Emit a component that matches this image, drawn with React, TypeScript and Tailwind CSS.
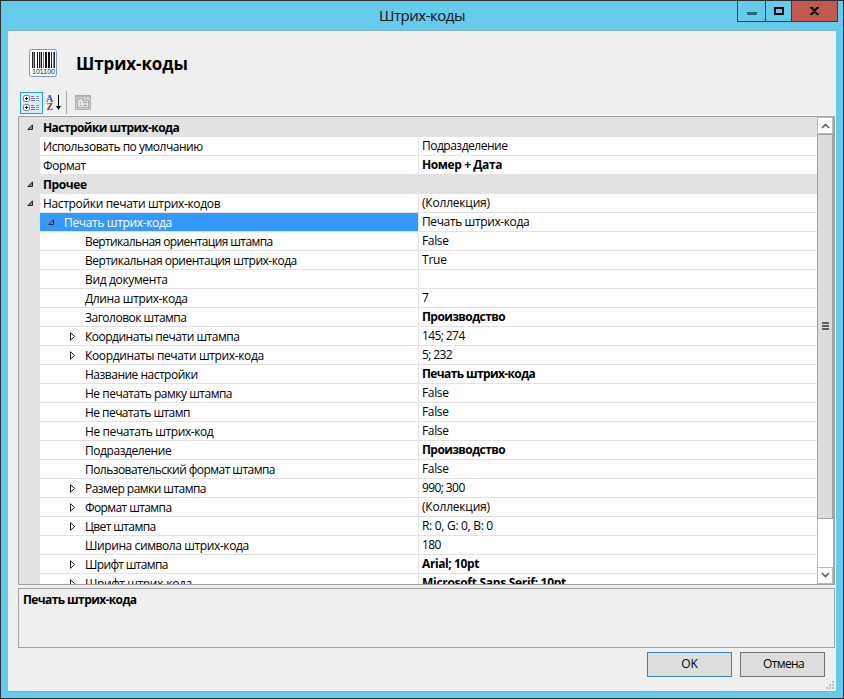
import React from "react";

type Row = {
  kind?: "category" | "selected";
  level: 0 | 1 | 2;
  label: string;
  track: string;
  value?: string;
  valueTrack?: string;
  bold?: boolean;
  arrow?: "open" | "closed";
};

const rows: Row[] = [
  { kind: "category", level: 0, label: "Настройки штрих-кода", track: "tracking-[-0.57px]", arrow: "open" },
  { level: 0, label: "Использовать по умолчанию", track: "tracking-[-0.48px]", value: "Подразделение", valueTrack: "tracking-[-0.5px]" },
  { level: 0, label: "Формат", track: "tracking-[-0.4px]", value: "Номер + Дата", valueTrack: "tracking-[-0.4px]", bold: true },
  { kind: "category", level: 0, label: "Прочее", track: "tracking-[-0.4px]", arrow: "open" },
  { level: 0, label: "Настройки печати штрих-кодов", track: "tracking-[-0.33px]", value: "(Коллекция)", valueTrack: "tracking-[-0.2px]", arrow: "open" },
  { kind: "selected", level: 1, label: "Печать штрих-кода", track: "tracking-[-0.35px]", value: "Печать штрих-кода", valueTrack: "tracking-[-0.38px]", arrow: "open" },
  { level: 2, label: "Вертикальная ориентация штампа", track: "tracking-[-0.6px]", value: "False", valueTrack: "tracking-[-0.35px]" },
  { level: 2, label: "Вертикальная ориентация штрих-кода", track: "tracking-[-0.48px]", value: "True", valueTrack: "tracking-[-0.2px]" },
  { level: 2, label: "Вид документа", track: "tracking-[-0.35px]", value: "" },
  { level: 2, label: "Длина штрих-кода", track: "tracking-[-0.37px]", value: "7" },
  { level: 2, label: "Заголовок штампа", track: "tracking-[-0.5px]", value: "Производство", valueTrack: "tracking-[-0.58px]", bold: true },
  { level: 2, label: "Координаты печати штампа", track: "tracking-[-0.5px]", value: "145; 274", valueTrack: "tracking-[-0.6px]", arrow: "closed" },
  { level: 2, label: "Координаты печати штрих-кода", track: "tracking-[-0.36px]", value: "5; 232", valueTrack: "tracking-[-0.6px]", arrow: "closed" },
  { level: 2, label: "Название настройки", track: "tracking-[-0.5px]", value: "Печать штрих-кода", valueTrack: "tracking-[-0.62px]", bold: true },
  { level: 2, label: "Не печатать рамку штампа", track: "tracking-[-0.5px]", value: "False", valueTrack: "tracking-[-0.35px]" },
  { level: 2, label: "Не печатать штамп", track: "tracking-[-0.55px]", value: "False", valueTrack: "tracking-[-0.35px]" },
  { level: 2, label: "Не печатать штрих-код", track: "tracking-[-0.4px]", value: "False", valueTrack: "tracking-[-0.35px]" },
  { level: 2, label: "Подразделение", track: "tracking-[-0.43px]", value: "Производство", valueTrack: "tracking-[-0.58px]", bold: true },
  { level: 2, label: "Пользовательский формат штампа", track: "tracking-[-0.55px]", value: "False", valueTrack: "tracking-[-0.35px]" },
  { level: 2, label: "Размер рамки штампа", track: "tracking-[-0.55px]", value: "990; 300", valueTrack: "tracking-[-0.6px]", arrow: "closed" },
  { level: 2, label: "Формат штампа", track: "tracking-[-0.6px]", value: "(Коллекция)", valueTrack: "tracking-[-0.2px]", arrow: "closed" },
  { level: 2, label: "Цвет штампа", track: "tracking-[-0.6px]", value: "R: 0, G: 0, B: 0", valueTrack: "tracking-[-0.3px]", arrow: "closed" },
  { level: 2, label: "Ширина символа штрих-кода", track: "tracking-[-0.4px]", value: "180", valueTrack: "tracking-[-0.6px]" },
  { level: 2, label: "Шрифт штампа", track: "tracking-[-0.65px]", value: "Arial; 10pt", valueTrack: "tracking-[-0.4px]", bold: true, arrow: "closed" },
  { level: 2, label: "Шрифт штрих-кода", track: "tracking-[-0.4px]", value: "Microsoft Sans Serif; 10pt", valueTrack: "tracking-[-0.3px]", bold: true, arrow: "closed" },
];

function OpenArrow() {
  return (
    <svg width="7" height="7" viewBox="0 0 7 7" className="block">
      <path d="M5.5 .8v4.7H.8z" fill="#8c8c8c" stroke="#262626" strokeWidth="1" />
    </svg>
  );
}

function ClosedArrow() {
  return (
    <svg width="6" height="9" viewBox="0 0 6 9" className="block">
      <path d="M.5 .7v7.6L4.600 4.500z" fill="#fff" stroke="#222" strokeWidth="1" />
    </svg>
  );
}

function GridRow({ row }: { row: Row }) {
  if (row.kind === "category") {
    return (
      <div className="flex h-[19px] shrink-0 bg-[#e2e2e2] font-bold">
        <div className="w-[21px] shrink-0 pt-1.5 pl-2"><OpenArrow /></div>
        <span className={`pl-[3px] leading-[19px] ${row.track}`}>{row.label}</span>
      </div>
    );
  }
  const selected = row.kind === "selected";
  return (
    <div className="flex h-[19px] shrink-0">
      <div className="w-[21px] shrink-0 bg-[#e2e2e2] pt-1.5 pl-2">
        {row.level === 0 && row.arrow && <OpenArrow />}
      </div>
      <div className={`flex w-[378px] shrink-0 border-b border-[#e2e2e2] ${selected ? "bg-[#3399ff] text-white" : "text-black"}`}>
        {row.level === 1 && <div className="w-[21px] pt-1.5 pl-2"><OpenArrow /></div>}
        {row.level === 2 && (
          <div className="w-[42px] pt-[5px] pl-[30px]">{row.arrow && <ClosedArrow />}</div>
        )}
        <span className={`pl-[3px] leading-[19px] ${row.track}`}>{row.label}</span>
      </div>
      <div className={`min-w-0 flex-1 border-b border-l border-[#e2e2e2] pl-[3px] leading-[17px] ${row.bold ? "font-bold" : ""} ${row.valueTrack ?? ""}`}>
        {row.value}
      </div>
    </div>
  );
}

const bars: [number, number, string][] = [
  [3, 1, "#222"], [4, 1, "#999"], [5, 1, "#333"], [8, 1, "#111"], [10, 1, "#222"], [11, 1, "#aaa"],
  [12, 1, "#111"], [14, 1, "#777"], [16, 2, "#111"], [19, 2, "#111"], [22, 1, "#222"], [24, 1, "#888"], [25, 1, "#222"],
];

function BarcodeIcon() {
  return (
    <svg width="28" height="28" viewBox="0 0 28 28">
      <rect x=".5" y=".5" width="27" height="27" rx="2" fill="#fff" stroke="#7d93cf" />
      {bars.map(([x, w, fill]) => (
        <rect key={x} x={x} y="3" width={w} height="16" fill={fill} />
      ))}
      <text x="3" y="25" fontSize="6.5" textLength="23" lengthAdjust="spacingAndGlyphs" fontFamily="Liberation Sans, sans-serif" fill="#222">101100</text>
    </svg>
  );
}

function CategorizedIcon() {
  return (
    <svg width="17" height="16" viewBox="0 0 17 16" shapeRendering="crispEdges">
      {[0, 9].map((y) => (
        <g key={y}>
          <rect x=".5" y={y + 0.5} width="6" height="6" rx="1.5" fill="#fff" stroke="#7288b0" shapeRendering="auto" />
          <path d={`M2 ${y + 3.5}h3M3.5 ${y + 2}v3`} stroke="#000" />
          <path d={`M8 ${y + 1.5}h3M8 ${y + 3.5}h4M8 ${y + 5.5}h4`} stroke="#64779c" />
          <path d={`M13 ${y + 1.5}h3M13 ${y + 3.5}h3M13 ${y + 5.5}h3`} stroke="#8798ba" />
        </g>
      ))}
    </svg>
  );
}

function SortIcon() {
  return (
    <svg width="16" height="16" viewBox="0 0 16 16">
      <text x="0" y="7" fontSize="10" fontWeight="bold" fontFamily="Liberation Serif, serif" fill="#3455a4">A</text>
      <text x="0.5" y="15" fontSize="10" fontWeight="bold" fontFamily="Liberation Serif, serif" fill="#8f2f2f">Z</text>
      <path d="M12.500 0v12" stroke="#000" shapeRendering="crispEdges" />
      <path d="M10 11h5l-2.500 4z" fill="#000" />
    </svg>
  );
}

function PagesIcon() {
  return (
    <svg width="16" height="15" viewBox="0 0 16 15" shapeRendering="crispEdges">
      <rect x=".5" y=".5" width="15" height="14" fill="#cfcfcf" stroke="#adadad" />
      <path d="M1 1.500h14" stroke="#b4b4b4" />
      <path d="M2.500 12.500v-8h1v-1h4v2h6v7z" fill="#e4e4e4" stroke="#adadad" />
      <path d="M5 7.500h1M8 7.500h4M5 10.500h1M8 10.500h4" stroke="#9c9c9c" />
    </svg>
  );
}

function ScrollBar() {
  return (
    <div className="flex w-[17px] shrink-0 flex-col border-r border-[#a8a8a8] bg-white">
      <div className="flex h-[17px] shrink-0 items-center justify-center border border-[#bababa] bg-white">
        <svg width="9" height="6" viewBox="0 0 9 6"><path d="M1 5l3.500-3.500L8 5" fill="none" stroke="#606060" strokeWidth="1.600" /></svg>
      </div>
      <div className="flex h-[385px] shrink-0 flex-col items-center justify-center gap-px border border-[#a0a0a0] bg-[#dcdcdc] pb-0.5">
        <div className="h-0.5 w-[7px] bg-[#606060]" />
        <div className="h-0.5 w-[7px] bg-[#606060]" />
        <div className="h-0.5 w-[7px] bg-[#606060]" />
      </div>
      <div className="min-h-0 flex-1 border-l border-[#bababa]" />
      <div className="flex h-[17px] shrink-0 items-center justify-center border border-[#bababa] bg-white pb-0.5">
        <svg width="9" height="6" viewBox="0 0 9 6"><path d="M1 1l3.500 3.500L8 1" fill="none" stroke="#606060" strokeWidth="1.600" /></svg>
      </div>
    </div>
  );
}

function TitleBar() {
  return (
    <div className="relative flex h-[29px] items-center justify-center">
      <h1 className="pb-px text-[15px] leading-[20px] tracking-[-0.5px] text-[#111]">Штрих-коды</h1>
      <div className="absolute top-0 right-[5px] flex h-[21px] border border-t-0 border-[#2c3e48]">
        <div className="flex w-[27px] justify-center"><div className="mt-[11px] h-[3px] w-2.5 bg-[#33667a]" /></div>
        <div className="flex w-[27px] justify-center border-x border-[#2c3e48]"><div className="mt-1.5 h-2 w-2.5 border-2 border-black" /></div>
        <div className="flex w-[45px] justify-center bg-[#c35a50]">
          <svg width="9" height="8" viewBox="0 0 9 8" className="mt-1.5"><path d="M1 0l7 8M8 0L1 8M0 .5h3M6 .5h3M0 7.500h3M6 7.500h3" stroke="#000" strokeWidth="2" /></svg>
        </div>
      </div>
    </div>
  );
}

export default function App() {
  return (
    <div className="flex h-[699px] w-[844px] flex-col border border-[#2e2e32] bg-[#66caea] font-['Open_Sans','Noto_Sans',sans-serif] text-[12px] whitespace-nowrap text-black">
      <TitleBar />
      <main className="mx-[7px] flex h-[662px] flex-col border-y border-[#7fb0c4] bg-[#efefef] pl-2.5">
        <header className="flex h-[61px] items-center gap-[19px] pt-1 pl-[11px]">
          <div className="pb-0.5"><BarcodeIcon /></div>
          <h2 className="text-[17px] font-bold tracking-[-0.1px]">Штрих-коды</h2>
        </header>
        <div className="flex h-6 w-[817px] items-start border-b border-[#f8f8f8] pl-0.5">
          <div className="flex h-[22px] w-[23px] items-center justify-center border border-[#26a0da] bg-[#dcebfc]"><CategorizedIcon /></div>
          <div className="pt-[3px] pl-[3px]"><SortIcon /></div>
          <div className="mt-[-1px] ml-[4px] h-[23px] w-px bg-[#a6a6a6]" />
          <div className="pt-[3px] pl-2"><PagesIcon /></div>
        </div>
        <section className="flex h-[469px] w-[817px] shrink-0 border border-[#a0a0a0] bg-white">
          <div className="flex min-w-0 flex-1 flex-col overflow-hidden">
            <div className="h-px shrink-0 bg-[#e2e2e2]" />
            {rows.map((row, i) => <GridRow key={i} row={row} />)}
          </div>
          <ScrollBar />
        </section>
        <section className="mt-[3px] h-[60px] w-[817px] shrink-0 border border-[#a0a0a0] pt-[2px] pl-1 leading-[17px] font-bold tracking-[-0.6px]">
          Печать штрих-кода
        </section>
        <footer className="relative flex h-[43px] gap-2 pt-1 pl-[629px]">
          <button className="h-[25px] w-[85px] border border-[#3c7fb1] bg-[#dddddd] pb-0.5">OK</button>
          <button className="h-[25px] w-[85px] border border-[#707070] bg-[#dddddd] pb-0.5 pl-0.5 tracking-[-0.6px]">Отмена</button>
          <svg className="absolute right-0.5 bottom-0.5" width="8" height="8" viewBox="0 0 8 8" fill="#bfbfbf"><path d="M6 0h2v2H6zM3 3h2v2H3zM6 3h2v2H6zM0 6h2v2H0zM3 6h2v2H3zM6 6h2v2H6z" /></svg>
        </footer>
      </main>
    </div>
  );
}
